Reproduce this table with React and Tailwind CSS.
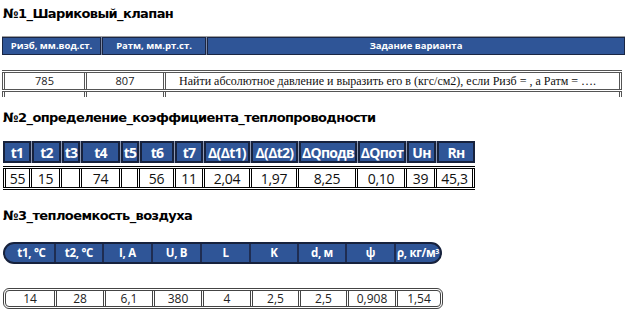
import React from 'react';

// Excel-like task sheet: three numbered blocks, each with a blue header row and a value row
const titleFont = { fontFamily: '"DejaVu Sans", Verdana, sans-serif' };
const cellFont = { fontFamily: '"Open Sans", "Noto Sans", sans-serif' };
const serifFont = { fontFamily: '"Liberation Serif", "Times New Roman", serif' };

const Title = ({ children, className }) => (
    <div className={`pl-[3px] text-[13px] font-bold leading-4 tracking-[-0.6px] text-black ${className}`} style={titleFont}>
        {children}
    </div>
);

const valveHead = [
    { w: 'w-[99px]', t: 'Ризб, мм.вод.ст.' },
    { w: 'w-[104px]', t: 'Ратм, мм.рт.ст.' },
    { w: 'w-[418px]', t: 'Задание варианта' },
];

const conductHead = [
    { w: 'w-[28px]', t: 't1' },
    { w: 'w-[29px]', t: 't2' },
    { w: 'w-[18px]', t: 't3' },
    { w: 'w-[39px]', t: 't4' },
    { w: 'w-[18px]', t: 't5' },
    { w: 'w-[34px]', t: 't6' },
    { w: 'w-[28px]', t: 't7' },
    { w: 'w-[46px]', t: 'Δ(Δt1)' },
    { w: 'w-[47px]', t: 'Δ(Δt2)' },
    { w: 'w-[58px]', t: 'ΔQподв' },
    { w: 'w-[48px]', t: 'ΔQпот' },
    { w: 'w-[29px]', t: 'Uн' },
    { w: 'w-[38px]', t: 'Rн' },
];

const conductRow = [
    { w: 'w-[29px]', v: '55' },
    { w: 'w-[30px]', v: '15' },
    { w: 'w-[20px]', v: '' },
    { w: 'w-[40px]', v: '74' },
    { w: 'w-[18px]', v: '' },
    { w: 'w-[36px]', v: '56' },
    { w: 'w-[29px]', v: '11' },
    { w: 'w-[47px]', v: '2,04' },
    { w: 'w-[47px]', v: '1,97' },
    { w: 'w-[59px]', v: '8,25' },
    { w: 'w-[49px]', v: '0,10' },
    { w: 'w-[30px]', v: '39' },
    { w: 'w-[38px]', v: '45,3' },
];

const airHead = [
    { w: 'w-[49px]', t: <>t1, °C</> },
    { w: 'w-[48px]', t: <>t2, °C</> },
    { w: 'w-[49px]', t: 'I, A' },
    { w: 'w-[49px]', t: 'U, B' },
    { w: 'w-[49px]', t: 'L' },
    { w: 'w-[48px]', t: 'K' },
    { w: 'w-[48px]', t: 'd, м' },
    { w: 'w-[49px]', t: 'ψ' },
    { w: 'w-[46px]', t: <>ρ, кг/м<sup className="text-[7px]">3</sup></> },
];

const airRow = [
    { w: 'w-[48px]', v: '14' },
    { w: 'w-[49px]', v: '28' },
    { w: 'w-[49px]', v: '6,1' },
    { w: 'w-[49px]', v: '380' },
    { w: 'w-[49px]', v: '4' },
    { w: 'w-[48px]', v: '2,5' },
    { w: 'w-[48px]', v: '2,5' },
    { w: 'w-[49px]', v: '0,908' },
    { w: 'w-[45px]', v: '1,54' },
];

export default function App() {
    return (
        <div className="h-[321px] w-[635px] overflow-hidden bg-white pt-[6px]">
            <Title>№1_Шариковый_клапан</Title>

            {/* block 1 header */}
            <div className="ml-[2px] mt-[14px] flex h-[19px] w-[623px] gap-px border-t border-[#a0a0a0] bg-[#7d8aa8]" style={cellFont}>
                {valveHead.map((c, i) => (
                    <div
                        key={i}
                        className={`${c.w} flex items-center justify-center border border-[#1a2644] bg-[#2f5597] text-[9.5px] font-bold text-white`}
                    >
                        {c.t}
                    </div>
                ))}
            </div>

            {/* block 1 values */}
            <div className="ml-[2px] mt-[15px] flex h-[22px] w-[620px] border-y-[3px] border-double border-[#555]">
                <div className="flex w-[85px] items-center justify-center border-x-[3px] border-double border-[#555] text-[11px] text-[#222]" style={cellFont}>
                    785
                </div>
                <div className="flex w-[79px] items-center justify-center border-r-[3px] border-double border-[#555] text-[11px] text-[#222]" style={cellFont}>
                    807
                </div>
                <div className="flex flex-1 items-center border-r-[3px] border-double border-[#555] pl-[13px] text-[12px] text-[#111]" style={serifFont}>
                    Найти абсолютное давление и выразить его в (кгс/см2), если Ризб = , а Ратм = ….
                </div>
            </div>
            <div className="ml-[2px] flex h-[5px] w-[620px]">
                <div className="w-[85px] border-x-[3px] border-double border-[#555]" />
                <div className="w-[79px] border-r-[3px] border-double border-[#555]" />
                <div className="flex-1 border-r-[3px] border-double border-[#555]" />
            </div>

            <Title className="mt-[13px]">№2_определение_коэффициента_теплопроводности</Title>

            {/* block 2 header */}
            <div className="ml-[3px] mt-[15px] flex h-[22px] w-fit gap-px bg-[#8f9ab4]" style={cellFont}>
                {conductHead.map((c, i) => (
                    <div
                        key={i}
                        className={`${c.w} flex items-center justify-center border-2 border-[#17223d] bg-[#2f5597] text-[14px] font-bold tracking-[-0.7px] text-white`}
                    >
                        {c.t}
                    </div>
                ))}
            </div>

            {/* block 2 values */}
            <div className="ml-[3px] mt-[3px] flex h-[24px] w-fit border-y-[3px] border-double border-black" style={cellFont}>
                {conductRow.map((c, i) => (
                    <div
                        key={i}
                        className={`${c.w} flex items-center justify-center border-r-[3px] border-double border-black text-[14px] tracking-[-0.3px] text-[#111] ${i === 0 ? 'border-l-[3px]' : ''}`}
                    >
                        {c.v}
                    </div>
                ))}
            </div>

            <Title className="mt-[18px]">№3_теплоемкость_воздуха</Title>

            {/* block 3 header, rounded ends */}
            <div className="ml-[3px] mt-[18px] flex h-[22px] w-fit overflow-hidden rounded-[11px] border-2 border-[#17223d] bg-[#2f5597]" style={cellFont}>
                {airHead.map((c, i) => (
                    <div
                        key={i}
                        className={`${c.w} flex items-center justify-center text-[11.5px] font-bold tracking-[-0.3px] text-white ${i === 0 ? 'pl-[4px]' : 'border-l-2 border-[#1f2d52]'}`}
                    >
                        <span>{c.t}</span>
                    </div>
                ))}
            </div>

            {/* block 3 values, rounded ends */}
            <div className="ml-[3px] mt-[24px] flex h-[21px] w-fit overflow-hidden rounded-[6px] border-[3px] border-double border-[#444]" style={cellFont}>
                {airRow.map((c, i) => (
                    <div
                        key={i}
                        className={`${c.w} flex items-center justify-center text-[12px] text-[#222] ${i === 0 ? '' : 'border-l-[3px] border-double border-[#444]'}`}
                    >
                        {c.v}
                    </div>
                ))}
            </div>
        </div>
    );
}
